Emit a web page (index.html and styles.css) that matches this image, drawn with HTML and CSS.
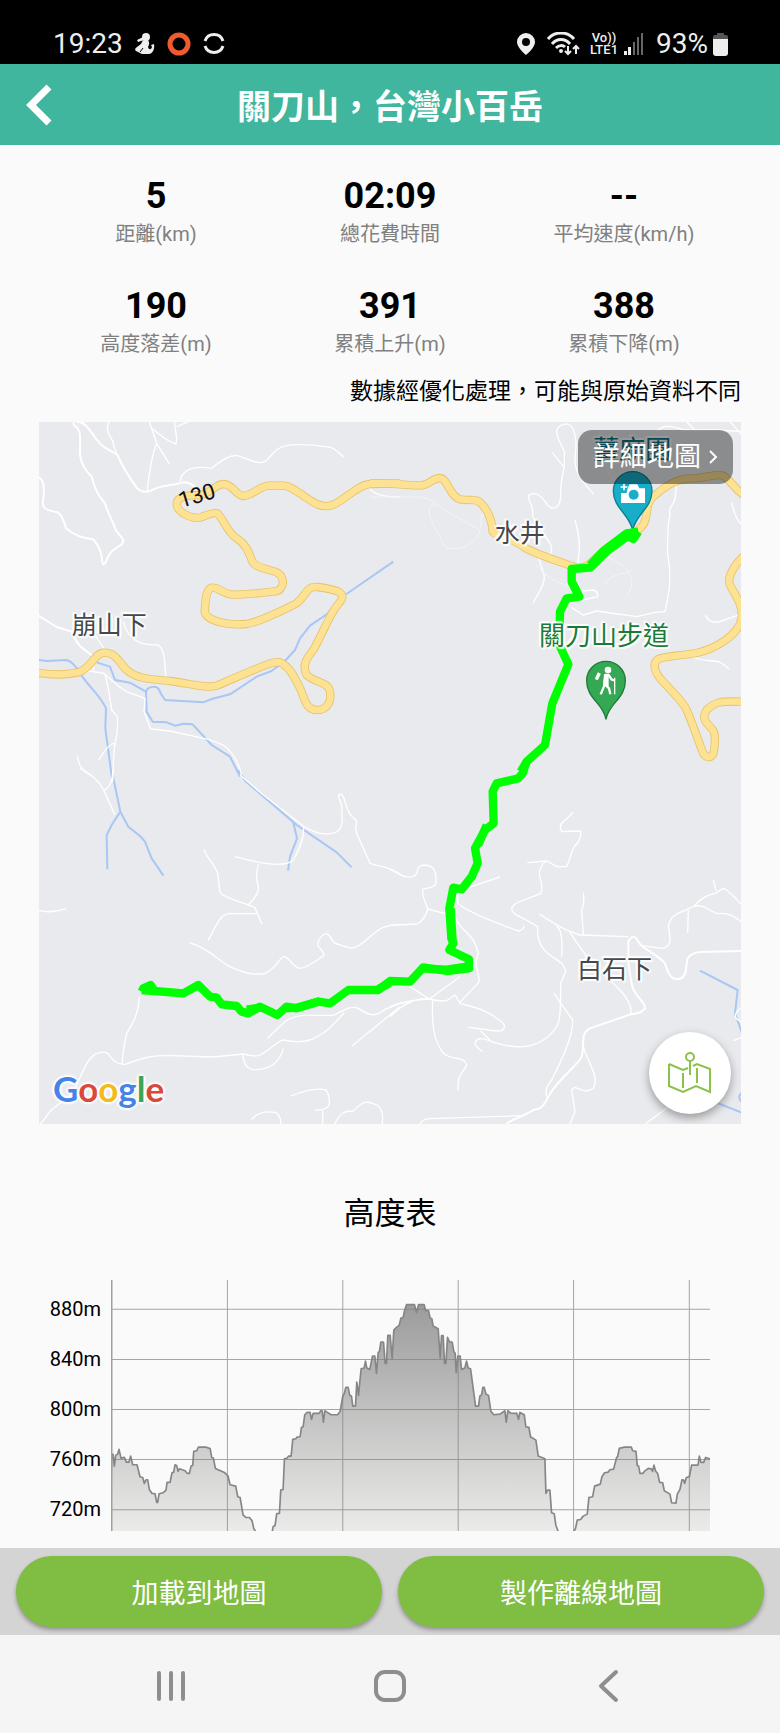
FILE: index.html
```html
<!DOCTYPE html>
<html lang="zh-Hant">

<head>
    <meta charset="UTF-8">
    <meta name="viewport" content="width=device-width, initial-scale=1.0">
    <title>關刀山，台灣小百岳</title>
    <link rel="stylesheet" href="styles.css">
</head>

<body>

    <div class="status-bar">
        <div class="status-left">
            <span>19:23</span>
            <svg width="20" height="22" viewBox="0 0 20 22" fill="#eee">
                <circle cx="11" cy="4" r="4" />
                <path d="M8 4L2 7l1 2 6-2zM8 7h5c2 3 1 5 0 7 1 3 3 3 4 0l-1-2 3-1c1 6-2 10-5 10H7l-6-3c-2-2 0-3 1-4l4-3z" />
                <path d="M5 19l3-4" stroke="#000" />
            </svg>
            <svg width="24" height="24" viewBox="0 0 24 24">
                <circle cx="12" cy="12" r="9" fill="none" stroke="#f15a30" stroke-width="5" />
            </svg>
            <svg width="22" height="22" viewBox="0 0 22 22" fill="none" stroke="#eee" stroke-width="3">
                <path d="M2 8a9.500 9.500 0 0 1 18 0M2 13a9.500 9.500 0 0 0 18 0" />
            </svg>
        </div>
        <div class="status-right">
            <svg width="18" height="22" viewBox="0 0 18 22">
                <path d="M9 0a9 9 0 0 0-9 9c0 6 9 13 9 13s9-7 9-13a9 9 0 0 0-9-9zm0 5a4 4 0 1 1 0 8 4 4 0 0 1 0-8z" fill="#eee" />
            </svg>
            <svg width="33" height="24" viewBox="0 0 33 24" fill="none" stroke="#eee" stroke-width="2">
                <path d="M1 7C8-1 20-1 27 7M5 12c5-6 13-6 18 0M9 16c3-3 7-3 9-1" stroke-width="3" />
                <circle cx="14" cy="19" r="1" fill="#eee" />
                <path d="M21 14v8m-3-3l3 3 3-3M29 22v-8m-3 3l3-3 3 3" />
            </svg>
            <span class="lte"><span>Vo))</span><span>LTE1</span></span>
            <svg width="20" height="22" viewBox="0 0 20 22">
                <path d="M0 18h3v4H0zM4 14h3v8H4z" fill="#eee" />
                <path d="M9 9h2v13H9zM13 4h2v18h-2zM17 0h2v22h-2z" fill="#666" />
            </svg>
            <span class="percent">93%</span>
            <svg width="15" height="23" viewBox="0 0 15 23">
                <path d="M4 0h7v2h2q2 0 2 2v3H0V4q0-2 2-2h2z" fill="#555" />
                <path d="M0 6h15v14q0 3-3 3H3q-3 0-3-3z" fill="#eee" />
            </svg>
        </div>
    </div>

    <header>
        <button class="back" type="button" aria-label="返回">
            <svg width="26" height="42" viewBox="0 0 26 42" fill="none" stroke="#fff" stroke-width="7">
                <path d="M23 3L5 21l18 18" />
            </svg>
        </button>
        <h1>關刀山，台灣小百岳</h1>
    </header>

    <main>
        <dl class="stats">
            <div><dd>5</dd><dt>距離(km)</dt></div>
            <div><dd>02:09</dd><dt>總花費時間</dt></div>
            <div><dd>--</dd><dt>平均速度(km/h)</dt></div>
            <div><dd>190</dd><dt>高度落差(m)</dt></div>
            <div><dd>391</dd><dt>累積上升(m)</dt></div>
            <div><dd>388</dd><dt>累積下降(m)</dt></div>
        </dl>
        <p class="note">數據經優化處理，可能與原始資料不同</p>

        <section class="map">
            <svg class="map-canvas" viewBox="27 21 2106 2106">
                <defs>
                    <g id="highways">
                        <path d="M1110 205L1020 207C980 210 940 260 905 271C870 280 850 262 820 242C795 225 780 213 760 212H715C690 213 670 240 640 243C615 240 610 208 580 207C555 208 545 235 510 240C470 240 440 245 440 268C442 290 480 312 510 308C530 302 545 290 562 295C580 310 590 350 620 370C650 390 655 410 665 435C672 460 720 462 742 473C765 485 765 525 735 529C700 533 640 539 610 539C580 538 565 515 545 518C525 525 527 560 524 590C530 620 600 632 650 627C690 620 760 585 790 570C825 555 825 512 860 516C880 518 905 522 925 530C950 545 930 560 915 580C890 620 875 660 850 705C830 730 815 750 830 780C850 800 885 800 897 820C910 860 890 885 860 885C825 883 825 850 810 820C795 790 780 755 750 742C730 738 700 752 560 812C530 822 480 805 420 798C350 792 320 790 290 765C265 740 258 712 220 713C190 718 185 760 145 772C100 782 60 780 15 772" />
                        <g transform="translate(1080 0)">
                            <path d="M-60 205H-10C30 207 60 212 95 211C120 208 130 188 150 189C175 192 175 240 210 253C240 258 255 250 270 262C290 280 305 305 308 350C320 365 380 375 400 395C430 415 480 430 560 458C600 462 610 430 650 400C690 370 730 365 755 335C780 310 760 270 790 245C830 210 860 190 910 190C950 188 980 175 1000 182C1030 205 1040 230 1075 250" />
                            <path d="M1070 415C1030 450 1010 490 1020 510C1035 540 1060 570 1055 610C1045 660 980 700 920 714C870 722 820 725 805 732C785 745 795 770 810 790C850 835 880 860 890 885C910 930 925 980 940 1015C950 1030 970 1035 973 1000C975 970 978 955 965 940C945 920 935 910 950 885C975 860 985 858 1070 860" />
                        </g>
                    </g>
                </defs>

                <!-- rivers -->
                <g class="river">
                    <path d="M15 733L50 738L110 735Q130 740 150 775C180 820 210 840 228 880L226 940L246 1090" />
                    <path d="M200 742L240 755L255 795L300 803L348 830C350 815 385 805 392 835L405 855L520 862L545 852L600 838L680 785L725 768L765 738L795 705L810 670L840 632L890 598L945 540L1090 440" />
                    <path d="M348 830L350 890L368 920L410 922L435 932L460 926L488 928L545 990L600 1025L630 1085" />
                    <g transform="translate(0 1065)">
                        <path d="M245 0L271 125L295 170L330 198L345 215L365 265L400 317M271 125L245 165L230 195L232 298" />
                        <path d="M625 0L645 32L800 165L920 247L965 292M790 158L801 205L780 260L774 302" />
                    </g>
                    <g transform="translate(1080 1065)">
                        <path d="M930 602L1043 660L1035 730L1060 800M985 1000L1060 1030M1060 965q-25 15 0 35" />
                    </g>
                </g>

                <!-- local roads -->
                <g class="road">
                    <path d="M130 21L133 32C155 45 150 60 150 120C155 150 165 165 185 185C195 220 200 235 225 265C235 300 250 320 255 340C265 365 290 370 275 388C250 405 240 410 232 430Q220 460 217 440C215 410 205 390 190 373C160 370 130 360 108 340C100 310 90 290 75 290C40 285 35 275 40 250C45 210 40 190 20 185" />
                    <path d="M140 20C170 20 180 50 205 80C225 105 245 105 262 120C280 160 300 190 320 218Q345 240 370 223C400 208 430 212 460 202Q490 200 510 240" />
                    <path d="M20 598L80 636L125 650Q140 690 165 705L190 725V765" />
                    <path class="thin" d="M237 20C220 60 255 70 250 90L262 120M358 20L380 85L418 147M365 40C385 55 410 80 438 87L440 70L433 20M440 35L475 20M380 85C365 120 358 170 352 228M450 200C455 170 480 150 545 160C580 130 600 120 620 122C660 130 690 160 715 130C740 100 755 90 800 89Q850 88 903 97Q920 105 941 126M1014 215C1030 240 1060 245 1110 246" />
                    <path class="thin" d="M280 620C290 660 310 675 330 683C350 690 370 690 385 690C405 705 404 740 407 785M195 660L225 705M150 777L180 768L222 775C250 800 270 820 290 830L345 850L342 890L362 942L420 948L535 973L580 990Q620 1020 635 1080M225 780C240 830 240 860 245 885L262 905Q265 950 255 985C250 1020 250 1060 248 1100M255 985Q235 985 206 1036M142 1022Q145 1060 180 1080" />
                </g>
                <g class="road thin" transform="translate(1080 0)">
                    <path d="M487 113L523 158V110C510 80 500 70 500 45C510 25 540 20 548 40C565 80 555 100 555 140C560 190 590 210 610 238M523 155C515 190 510 220 512 245Q510 280 485 280C465 270 465 250 445 240Q420 230 415 245C420 270 430 270 428 305L480 385Q490 400 480 420M555 315Q570 370 568 400L562 460M445 420C450 460 465 470 463 490C460 520 445 530 430 565" />
                    <path class="faint" d="M-60 246H90C120 250 130 260 180 295L270 345Q270 370 225 395Q175 410 160 390C145 345 115 320 118 280Q130 262 150 275M270 345L275 300H310" />
                    <path d="M800 50C820 25 850 35 880 45H980L1060 50M890 20L920 50M1020 20L1060 65M860 210L855 250C850 275 835 270 840 300C830 340 835 370 832 410L838 455C845 520 830 560 825 590L795 592L740 605L620 588L580 600L545 578M578 528L610 525Q625 530 623 545L580 555M1025 262Q1035 310 1055 330M947 600C955 625 980 625 1000 616L1060 595M895 720C930 740 960 735 985 740Q1000 745 1018 763" />
                    <path class="faint" d="M650 425C710 450 730 480 725 510Q720 535 705 548M645 508C660 475 700 480 725 465M440 450C470 490 510 505 540 515M650 140C640 170 670 190 690 210" />
                </g>
                <g class="road thin" transform="translate(0 1065)">
                    <path d="M150 -5C190 15 210 35 222 62L255 135M248 0Q250 45 222 62M630 15L700 75L820 168C860 195 890 195 915 188C945 175 935 140 935 110C935 95 920 80 928 73Q940 70 945 95C955 130 960 135 978 150C985 165 970 170 980 190L1020 280C1050 290 1080 290 1110 312M820 168C825 210 800 250 790 270Q760 300 615 260M685 283C670 340 690 340 685 360Q680 380 655 405M523 238C525 260 550 275 563 310C570 350 565 365 575 372C600 390 650 400 675 413L696 463M680 431H600C570 430 560 465 534 512M20 420Q60 432 108 416" />
                    <path d="M480 519C530 530 570 575 600 590Q660 620 705 610C740 595 745 565 763 559C780 565 790 595 812 595C840 590 860 570 882 556C880 540 870 540 863 525C865 500 890 480 900 500C910 520 910 520 965 535C1000 530 1020 490 1060 472Q1080 465 1110 463" />
                    <path d="M328 680C325 730 310 760 290 790Q280 830 276 883M20 1070C50 1050 50 1030 70 1015L130 970C160 900 170 870 195 853Q225 840 235 852Q255 885 285 883C350 860 370 856 420 857L550 861L640 852Q680 862 690 855C720 840 740 815 760 810Q830 825 870 795C900 780 920 750 943 728M638 852Q640 890 665 898Q740 905 760 836M712 805C760 760 770 740 820 736H910C940 725 955 705 985 715C1020 740 1040 740 1065 718L1110 700M965 829L1110 710M783 978Q850 950 888 960C900 975 898 990 898 1005Q890 1020 855 1021M878 1021V1070M664 1048Q690 1020 735 1027Q755 1035 752 1070M910 1070C930 1025 945 1023 970 1023C990 1005 1000 985 1040 1005Q1065 1020 1055 1070" />
                </g>
                <g class="road" transform="translate(1080 1065)">
                    <path d="M348 1062C380 1040 400 1040 430 1020C455 1015 460 1010 475 980C500 930 560 890 575 860C585 820 570 790 600 775L725 732Q755 730 765 715C765 690 730 680 725 640L715 580V515Q730 485 745 515C760 540 800 550 825 580C835 610 840 628 865 628C895 620 885 590 893 565Q905 548 930 546L1060 543" />
                    <path class="thin" d="M0 298C30 310 45 330 75 317C90 300 75 290 100 285C130 285 140 300 138 340C130 360 105 350 98 360C95 380 105 390 113 417Q105 450 80 462L0 466M113 417L170 432M235 353L330 321M200 370L205 402Q240 430 385 483Q400 480 402 468M195 440C215 490 250 485 265 550C250 580 265 600 268 635L210 697M210 620L118 687M60 650L118 687Q50 690 0 710M0 740Q60 680 118 687C180 700 170 690 195 675L210 700C240 710 280 710 340 760C350 775 335 785 320 783L235 772M128 692C125 760 130 810 160 850C190 875 220 855 230 885C220 910 200 910 205 962M272 783L305 815Q260 795 255 820Q260 835 278 845M305 815C380 840 430 830 460 810C520 770 510 740 512 640L527 605C525 580 500 570 480 555C460 540 440 520 443 470L400 445Q350 425 372 405C390 390 420 385 452 370C465 340 440 320 450 300Q455 280 472 273L412 278M472 273L500 290H530C545 260 540 240 560 222C580 195 570 180 570 183L515 185Q505 165 520 155L550 127" />
                    <path class="thin" d="M448 432C500 465 530 485 570 495L715 500M500 470Q520 480 515 560M540 488L590 560M580 368Q585 400 575 420L580 495M665 635Q730 695 722 730M492 670L548 750C550 800 510 880 485 930Q460 960 472 985M580 830C590 870 630 920 610 955C590 970 575 960 555 952Q540 955 548 980L555 1025L540 1062M90 1062Q95 1048 120 1046L400 1037M755 527L815 535C850 530 840 500 835 470C840 430 870 430 910 410C930 390 945 375 975 370L1000 355Q1015 360 1060 410M910 410C940 400 950 420 980 430C1010 430 1025 430 1060 462M970 330L978 362M895 420L893 488M1060 710Q1030 725 1038 745L1060 760M1030 812L1060 800M765 1062L830 1015" />
                </g>

                <use href="#highways" class="casing" />
                <use href="#highways" class="highway" />

                <!-- hiking spots -->
                <g transform="translate(1808 346)">
                    <path d="M0 0C-10-50-58-66-58-118A58 58 0 0 1 58-118C58-66 10-50 0 0z" fill="#18aec8" stroke="#0d7f92" stroke-width="4" />
                    <path d="M-15-126L-9-138H14L20-126H37V-82H-35V-112H-18z" fill="#fff" />
                    <circle cx="3" cy="-107" r="15" fill="#18aec8" />
                    <path d="M-26-140V-120M-36-130H-16" stroke="#fff" stroke-width="5" />
                </g>
                <g transform="translate(1728 912)">
                    <path d="M0 0C-10-50-58-60-58-115A58 58 0 0 1 58-115C58-60 10-50 0 0z" fill="#34a853" stroke="#1e7a3a" stroke-width="4" />
                    <circle cx="6" cy="-147" r="10" fill="#fff" />
                    <path d="M-2-132h10l9 14 9 2M-3-120L-6-98L-16-74M-2-103L9-92L13-74" fill="none" stroke="#fff" stroke-width="7" />
                    <path d="M26-124V-74" stroke="#fff" stroke-width="4" />
                    <path d="M-20-138L-29-118" stroke="#fff" stroke-width="10" />
                    <path d="M-6-135H8V-98H-9z" fill="#fff" />
                </g>

                <!-- recorded track -->
                <g class="track">
                    <path d="M1825 350L1810 372L1795 362L1735 405L1680 458L1625 462V500L1648 545L1610 550L1590 590L1588 690L1615 748L1567 865L1545 990L1490 1040L1478 1075L1465 1090L1400 1105L1388 1130L1391 1225L1365 1245L1335 1300L1343 1345L1325 1385L1295 1423L1270 1418L1258 1480L1264 1570L1270 1585L1258 1605L1317 1633V1660L1250 1668L1180 1657L1140 1700L1080 1698L1045 1725H955L900 1765L865 1760L800 1780L770 1775L742 1800L690 1775L655 1795L635 1790L620 1773L575 1768L560 1748L540 1745L505 1710L460 1735L335 1725" />
                    <path d="M1825 350L1790 355L1720 408L1680 450M1625 500L1640 530M1490 1040L1472 1070M1370 1230L1345 1290M335 1730L340 1720L362 1710L370 1722M1045 1722L1080 1704M1170 1660L1250 1664L1310 1655M650 1784L690 1778M770 1780L800 1778L870 1758M1262 1480L1268 1580" />
                </g>
            </svg>

            <span class="place ginger">薑麻園</span>
            <span class="place shuijing">水井</span>
            <span class="place bengshan">崩山下</span>
            <span class="place trail">關刀山步道</span>
            <span class="place baishi">白石下</span>
            <span class="place route">130</span>

            <a class="detail" href="#">詳細地圖
                <svg width="9" height="14" viewBox="0 0 9 14" fill="none" stroke="#fff" stroke-width="2">
                    <path d="M1 1l6 6-6 6" />
                </svg>
            </a>

            <div class="google"><span class="b">G</span><span class="r">o</span><span class="y">o</span><span class="b">g</span><span class="g">l</span><span class="r">e</span></div>

            <button class="layers" type="button" aria-label="地圖圖層">
                <svg width="44" height="42" viewBox="0 0 44 42" fill="none" stroke="#8bc34a" stroke-width="2">
                    <path d="M1 12l14 6 5-2M25 14l4-2 13 5v23l-14-6-13 6-14-6V12" />
                    <path d="M15 21v15M29 16v15M22 8v15" />
                    <circle cx="22" cy="5" r="4" />
                </svg>
            </button>
        </section>

        <section class="altitude">
            <h2>高度表</h2>
            <div class="chart">
                <ul class="axis">
                    <li>880m</li>
                    <li>840m</li>
                    <li>800m</li>
                    <li>760m</li>
                    <li>720m</li>
                </ul>
                <svg class="plot" viewBox="244 300 1796 754">
                    <defs>
                        <linearGradient id="fade" gradientUnits="userSpaceOnUse" x1="0" y1="374" x2="0" y2="1054">
                            <stop offset="0" stop-color="#9c9c9c" />
                            <stop offset="1" stop-color="#ebebea" />
                        </linearGradient>
                    </defs>
                    <path class="area" d="M240 1062L246 830L250 822L254 858L258 826L264 822L268 808L274 834L284 832L290 846H298L303 828L309 854H322L331 890L339 892L344 910L349 899H354L359 928L367 940L376 941L381 967H384L388 941L400 938L409 930L412 907H421L427 878L432 876L436 854L441 856L445 874L449 866L466 872L473 880H479L484 858L489 856L492 814L501 812L506 801H528L541 805L546 832L551 834L557 865L584 877L595 888L601 914L618 918L624 950L631 952L640 1004L648 1012H659L667 1022L672 1045L682 1062z" />
                    <path class="area" d="M726 1062L730 1040L736 1036L741 1000H749L753 930L760 928L764 836L772 834L776 828H784L789 778L798 776L802 771L811 770L815 742L820 740L825 704L832 697H841L845 718L850 700H868L873 692H877L881 726L885 692L893 697L904 704H923L931 694L939 648L943 642L948 622H955L960 646L965 648L969 678H977L981 606L986 646L994 566L1003 564L1007 543L1011 564L1020 568L1028 528H1035L1040 580L1045 518L1049 514L1053 486H1061L1066 550H1070L1074 466H1081L1087 536L1092 450L1100 442L1108 436L1113 415L1120 412L1124 392L1130 374H1154L1160 398L1166 374H1183L1187 391L1196 392L1201 414L1206 416L1210 438L1225 446L1231 534L1235 467H1240L1244 550H1248L1253 472L1259 486H1267L1272 515L1276 520L1279 578L1284 528H1291L1295 568L1305 564L1310 543L1315 564L1322 566L1332 640L1337 678H1346L1350 648L1355 645L1359 622H1363L1368 642L1376 646L1383 694L1392 704L1410 702L1425 692L1429 726L1434 692L1442 699L1461 700L1466 718L1470 697L1483 704L1488 740L1497 742L1502 770L1518 780L1525 828L1545 836L1548 940L1553 930H1560L1565 998L1573 1001L1578 1036L1588 1062z" />
                    <path class="area" d="M1628 1062L1637 1044L1642 1020L1652 1018L1660 1008L1672 1002L1677 952L1688 950L1694 918L1711 912L1716 890L1724 878L1735 876L1740 869L1751 867L1760 832L1763 830L1768 805L1783 801H1804L1808 812L1818 814L1822 856L1826 858L1830 880H1839L1844 873L1855 865L1865 867L1868 874L1872 855L1877 873L1883 880L1889 907L1898 908L1903 932L1920 942L1925 968L1938 969L1942 942L1950 928L1956 899L1961 900L1964 910L1969 892L1978 890L1985 855H2004L2008 828L2013 847H2021L2027 832L2050 840V1062z" />
                    <path class="grid" d="M246 388H2040M246 538H2040M246 688H2040M246 838H2040M246 989H2040M593 300V1054M939 300V1054M1285 300V1054M1631 300V1054M1978 300V1054" />
                    <path class="y-axis" d="M246 300V1054" />
                </svg>
            </div>
        </section>
    </main>

    <div class="actions">
        <button type="button">加載到地圖</button>
        <button type="button">製作離線地圖</button>
    </div>

    <nav>
        <button type="button" aria-label="最近使用">
            <svg width="32" height="34" viewBox="0 0 32 34" fill="none" stroke="#8e8e8e" stroke-width="4" stroke-linecap="round">
                <path d="M4 4v26M16 4v26M28 4v26" />
            </svg>
        </button>
        <button type="button" aria-label="首頁">
            <svg width="34" height="34" viewBox="0 0 34 34" fill="none" stroke="#8e8e8e" stroke-width="4">
                <rect x="3" y="3" width="28" height="28" rx="9" />
            </svg>
        </button>
        <button type="button" aria-label="返回">
            <svg width="34" height="34" viewBox="0 0 34 34" fill="none" stroke="#8e8e8e" stroke-width="4" stroke-linecap="round" stroke-linejoin="round">
                <path d="M24 3L9 17l15 14" />
            </svg>
        </button>
    </nav>

</body>

</html>
```
FILE: styles.css
```css
* {
    box-sizing: border-box;
}

body {
    display: flex;
    flex-direction: column;
    min-height: 100vh;
    margin: 0;
    font-family: Roboto, "Noto Sans CJK TC", sans-serif;
    color: #000;
    background-color: #fafafa;
}

button {
    padding: 0;
    border: none;
    background: none;
    font-family: inherit;
    cursor: pointer;
}

svg {
    display: block;
}

/* status bar */
.status-bar {
    display: flex;
    justify-content: space-between;
    height: 64px;
    padding: 24px 52px 0 53px;
    background-color: #000;
    color: #eee;
    font-size: 28px;
    line-height: 40px;
}

.status-left,
.status-right {
    display: flex;
    align-items: center;
    gap: 12px;
    height: 40px;
}

.lte {
    display: flex;
    flex-direction: column;
    align-items: center;
    margin: 0 -6px 0 -2px;
    font-size: 13px;
    font-weight: 500;
    line-height: 12px;
}

.percent {
    margin-right: -7px;
}

/* title bar */
header {
    display: grid;
    grid-template-columns: 80px 1fr 80px;
    align-items: center;
    height: 81px;
    background-color: #3fb69d;
    color: #fff;
}

.back {
    padding-left: 26px;
}

h1 {
    margin: 0;
    padding-top: 4px;
    font-size: 34px;
    font-weight: 700;
    line-height: 48px;
    text-align: center;
}

main {
    flex: 1;
    padding: 0 39px;
}

/* numbers */
.stats {
    display: grid;
    grid-template-columns: repeat(3, 1fr);
    row-gap: 34px;
    margin: 0;
    padding-top: 29px;
    text-align: center;
}

.stats dd {
    margin: 0;
    font-size: 36px;
    font-weight: 700;
    line-height: 44px;
}

.stats dt {
    color: #808080;
    font-size: 20px;
    line-height: 32px;
}

.note {
    margin: 16px 0 14px;
    font-size: 23px;
    line-height: 32px;
    text-align: right;
}

/* map */
.map {
    position: relative;
    overflow: hidden;
}

.map-canvas {
    width: 100%;
    background-color: #e8eaed;
}

.map-canvas path {
    stroke-linejoin: round;
}

.river {
    fill: none;
    stroke: #a8c7f5;
    stroke-width: 6;
}

.road {
    fill: none;
    stroke: #fff;
    stroke-width: 6;
}

.thin {
    stroke-width: 4;
}

.faint {
    stroke: #f3f4f6;
    stroke-width: 3;
}

.casing {
    fill: none;
    stroke: #e8c266;
    stroke-width: 25;
}

.highway {
    fill: none;
    stroke: #fde293;
    stroke-width: 20;
}

.track {
    fill: none;
    stroke: #0f0;
    stroke-width: 25;
}

.place {
    position: absolute;
    transform: translate(-50%, -50%);
    color: #45484c;
    font-size: 25px;
    line-height: 32px;
    white-space: nowrap;
    text-shadow: 2px 0 1px #fffc, -2px 0 1px #fffc, 0 2px 1px #fffc, 0 -2px 1px #fffc, 2px 2px 1px #fffc, -2px -2px 1px #fffc;
}

.ginger {
    left: 84.5%;
    top: 4%;
    color: #0d7485;
    font-size: 26px;
}

.shuijing {
    left: 68.5%;
    top: 16%;
}

.bengshan {
    left: 10%;
    top: 29%;
}

.trail {
    left: 80.5%;
    top: 30.5%;
    color: #187c38;
    font-size: 26px;
}

.baishi {
    left: 82%;
    top: 78%;
}

.route {
    left: 22.5%;
    top: 10.5%;
    color: #111;
    font-size: 22px;
    text-shadow: none;
    transform: translate(-50%, -50%) rotate(-17deg);
}

.detail {
    position: absolute;
    top: 8px;
    right: 8px;
    display: flex;
    align-items: center;
    gap: 8px;
    padding: 7px 15px;
    border-radius: 14px;
    background-color: rgba(0, 0, 0, 0.4);
    color: #fff;
    font-size: 27px;
    line-height: 40px;
    text-decoration: none;
}

.google {
    position: absolute;
    left: 14px;
    bottom: 14px;
    font-family: Lato, sans-serif;
    font-size: 35px;
    font-weight: 700;
    line-height: 44px;
    text-shadow: 2px 0 2px #fff, -2px 0 2px #fff, 0 2px 2px #fff, 0 -2px 2px #fff;
}

.google .b {
    color: #4683e8;
}

.google .r {
    color: #d9483b;
}

.google .y {
    color: #f2bb1d;
}

.google .g {
    color: #3da457;
}

.layers {
    position: absolute;
    right: 10px;
    bottom: 10px;
    display: flex;
    align-items: center;
    justify-content: center;
    width: 82px;
    height: 82px;
    border-radius: 50%;
    background-color: #fff;
    box-shadow: 0 4px 10px rgba(0, 0, 0, 0.35);
}

/* altitude chart */
h2 {
    margin: 66px 0 42px;
    font-size: 31px;
    font-weight: 400;
    line-height: 48px;
    text-align: center;
}

.chart {
    display: flex;
    align-items: flex-start;
    gap: 10px;
    padding-right: 31px;
}

.axis {
    width: 62px;
    margin: 0;
    padding: 4px 0 0;
    list-style: none;
    font-size: 20px;
    line-height: 50px;
    text-align: right;
}

.axis li {
    height: 50px;
}

.axis li:last-child {
    height: 46px;
}

.plot {
    flex: 1;
    min-width: 0;
}

.area {
    fill: url(#fade);
    stroke: #868686;
    stroke-width: 5;
    stroke-linejoin: round;
}

.grid {
    fill: none;
    stroke: #808080;
    stroke-opacity: 0.7;
    stroke-width: 3;
}

.y-axis {
    stroke: #a0a0a0;
    stroke-width: 5;
}

/* bottom buttons */
.actions {
    display: flex;
    gap: 16px;
    padding: 8px 16px;
    background-color: #d4d4d4;
}

.actions button {
    flex: 1;
    height: 71px;
    border-radius: 36px;
    background-color: #80bd43;
    box-shadow: 0 3px 4px rgba(0, 0, 0, 0.3);
    color: #fff;
    font-size: 27px;
}

nav {
    display: flex;
    justify-content: space-around;
    align-items: center;
    height: 98px;
    padding: 4px 62px 0;
    background-color: #f5f5f5;
}

nav button {
    display: flex;
    flex: 1;
    justify-content: center;
}
```
